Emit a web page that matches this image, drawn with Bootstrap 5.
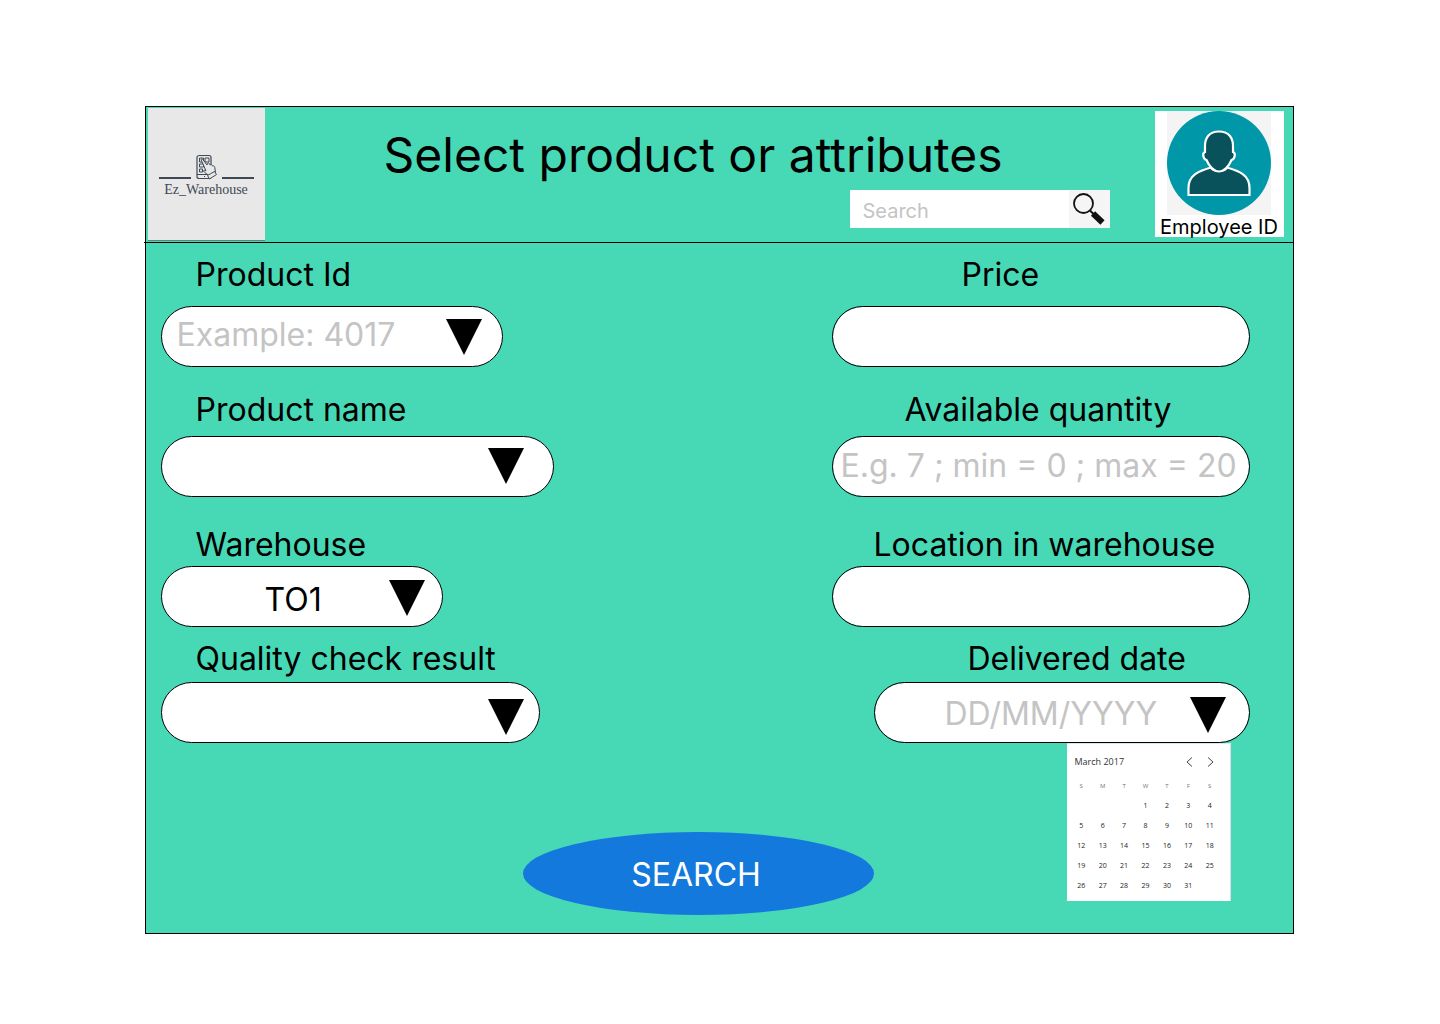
<!DOCTYPE html>
<html lang="en">
<head>
<meta charset="utf-8">
<meta name="viewport" content="width=device-width, initial-scale=1">
<title>Ez_Warehouse - Select product or attributes</title>
<link href="https://cdn.jsdelivr.net/npm/bootstrap@5.3.0/dist/css/bootstrap.min.css" rel="stylesheet">
<style>
  body { font-family: Inter, "Liberation Sans", sans-serif; color: #000; background: #fff; padding-right: 2px; }
  .panel { max-width: 1149px; margin: 106px auto 90px; background: #47d9b6; border: 1px solid #000; }
  .panel-head { min-height: 136px; border-bottom: 1px solid #000; margin-left: -2px; padding: 1px 9px 1px 4px; }
  .brand { width: 117px; background: #e8e8e8; padding-top: 44px; color: #3f4956; font: 14px/16px "Liberation Serif", serif; text-align: center; text-decoration: none; border-bottom: 1px solid #777; }
  .brand svg { display: block; width: 117px; height: 30px; }
  .head-main { padding-top: 18px; gap: 6px; }
  .page-title { font-size: 48px; line-height: 58px; font-weight: 400; padding-left: 119px; }
  .quick { width: 260px; height: 38px; }
  .quick .form-control { font-size: 20px; padding: 4px 13px 0; color: #000; }
  .quick .btn { width: 41px; background: #f5f5f5; }
  .profile { width: 129px; height: 126px; font-size: 20px; line-height: 24px; color: #000; margin: 3px 0 0 45px; text-decoration: none; }
  .profile svg { display: block; width: 104px; height: 104px; margin: 0 auto; }
  .panel-body { padding: 12px 43px 18px 15px; }
  .field-row { padding-bottom: 23px; }
  .field-row.low { padding-bottom: 28px; }
  .field-row.tight { padding-bottom: 12px; }
  .field-label { display: block; font-size: 32px; line-height: 39px; padding-left: 35px; margin-bottom: 12px; }
  .low .field-label { margin-bottom: 7px; }
  .tight .field-label { margin-bottom: 2px; }
  .last .field-label { margin-bottom: 4px; }
  .pill, .pill:focus { display: block; width: 100%; height: 61px; border: 1px solid #000; border-radius: 31px; font-size: 32px; line-height: 39px; color: #000; background-color: #fff; padding: 0 8px 2px; }
  .pill::placeholder, .pill.hinted, .quick .form-control::placeholder { color: #c4c4c4; opacity: 1; }
  .drop { background-image: url("data:image/svg+xml,%3Csvg xmlns='http://www.w3.org/2000/svg' viewBox='0 0 36 36'%3E%3Cpath d='M0 0H36L18 36Z'/%3E%3C/svg%3E"); background-size: 36px 36px; background-position: right 20px top 12px; background-repeat: no-repeat; }
  .pill.hinted { padding: 0 60px 4px 15px; }
  .w-id { width: 342px; } .w-name { width: 393px; } .w-site { width: 282px; } .w-check { width: 379px; } .w-right { width: 418px; } .w-date { width: 376px; }
  .drop-name { background-position: right 29px top 11px; }
  .drop-site { background-position: right 17px top 13px; padding: 5px 0 0 103px; }
  .drop-check { background-position: right 15px top 16px; }
  .drop-date { background-position: right 23px top 14px; padding: 2px 0 0 70px; }
  .lab-price { padding-left: 130px; } .lab-qty { padding-left: 73px; } .lab-loc { padding-left: 42px; } .lab-date { padding-left: 94px; }
  .calendar { position: absolute; top: 100%; right: 19px; width: 164px; height: 158px; background: #fff; border-top: 1px solid #d8e8ee; border-right: 1px solid #dde; padding: 8px 9px 0 4px; font-family: "Open Sans", "Noto Sans", sans-serif; color: #333; }
  .month { font-size: 9px; font-weight: 500; line-height: 20px; padding-left: 4px; }
  .arrow { border: 0; background: none; padding: 0; width: 21px; height: 20px; display: flex; align-items: center; justify-content: center; }
  .days { width: 150px; table-layout: fixed; margin-top: 4px; font-size: 7px; font-weight: 500; line-height: 20px; text-align: center; color: #222; }
  .days th, .days td { padding: 0; height: 20px; }
  .days th { font-size: 6px; font-weight: 400; color: #777; }
  .go-wrap { padding: 89px 14px 0 0; }
  .go, .go:hover { width: 351px; height: 83px; border: 0; border-radius: 50%; background: #1479dc; color: #fff; font-size: 32px; line-height: 39px; padding: 2px 4px 0 0; }
</style>
</head>
<body>
<main class="panel">
  <header class="panel-head d-flex">
    <a class="brand flex-shrink-0" href="#">
      <svg viewBox="0 0 117 30" fill="none" stroke="#3f4956" aria-hidden="true">
        <path d="M11 26H43M74 26H106" stroke-width="2"/>
        <rect x="49" y="3.500" width="14" height="23" rx="2" stroke-width="1.200"/>
        <path d="M49 22.500H63M56 24.500h1M51.500 6h4v4h-4zM57 6h4v4h-4zM51.500 12h4v3h-4zM51.500 17h3v3h-3z"/>
        <path d="M53 7.500c1-1 2 0 3 1.500l3 4 .5-1.500c1-1 2-.3 2.300 1l.4.500c1-1 2 0 2.400 1 1-.5 2 .2 2.200 1.500l.7 5-6 3.500c-2-2-5-3-6-5 0-1 1.500-1 2.500 0z" fill="#e8e8e8"/>
        <path d="M59.500 23.500l7-4 2 3-7 4.500z" fill="#e8e8e8"/>
      </svg>
      Ez_Warehouse
    </a>
    <div class="head-main flex-grow-1 d-flex flex-column">
      <h1 class="page-title mb-0">Select product or attributes</h1>
      <form class="quick d-flex align-self-end" role="search">
        <input class="form-control border-0 rounded-0" type="search" placeholder="Search" aria-label="Search">
        <button class="btn border-0 rounded-0 p-0 flex-shrink-0" type="button" aria-label="Search">
          <svg class="d-block" width="41" height="38" viewBox="0 0 41 38" fill="none" stroke="#111" aria-hidden="true">
            <circle cx="14.500" cy="13.500" r="9.500" stroke-width="1.800"/>
            <path d="M21 20.500l4 4" stroke-width="2"/>
            <path d="M24 23.500L33.500 32.500" stroke-width="6"/>
          </svg>
        </button>
      </form>
    </div>
    <a class="profile bg-white text-center flex-shrink-0" href="#">
      <svg viewBox="0 0 104 104" aria-hidden="true">
        <path fill="#f4f4f4" d="M0 0H104V104H0z"/>
        <circle cx="52" cy="52" r="52" fill="#0097a9"/>
        <path d="M21.500 84V77C21.500 64 32 60 44 56.500 46 61 58 61 60 56.500 72 60 82.500 64 82.500 77V84Z" fill="#0a525b" stroke="#fff" stroke-width="2.200"/>
        <path d="M52 20.500C42 20.500 37.500 27 38 37V41C35 42 36 48 39.500 49 42 55 47 60.500 52 60.500S62 55 64.500 49C68 48 69 42 66 41V37C66.500 27 62 20.500 52 20.500Z" fill="#0a525b" stroke="#fff" stroke-width="2.200"/>
      </svg>
      Employee ID
    </a>
  </header>

  <form class="panel-body">
    <div class="field-row d-flex justify-content-between">
      <div class="w-id">
        <label class="field-label" for="pid">Product Id</label>
        <select class="pill drop form-select hinted" id="pid"><option>Example: 4017</option></select>
      </div>
      <div class="w-right">
        <label class="field-label lab-price" for="price">Price</label>
        <input class="pill form-control" id="price" type="text">
      </div>
    </div>
    <div class="field-row low d-flex justify-content-between">
      <div class="w-name">
        <label class="field-label" for="pname">Product name</label>
        <select class="pill drop drop-name form-select" id="pname"><option></option></select>
      </div>
      <div class="w-right">
        <label class="field-label lab-qty" for="qty">Available quantity</label>
        <input class="pill form-control" id="qty" type="text" placeholder="E.g. 7 ; min = 0 ; max = 20">
      </div>
    </div>
    <div class="field-row tight d-flex justify-content-between">
      <div class="w-site">
        <label class="field-label" for="site">Warehouse</label>
        <select class="pill drop drop-site form-select" id="site"><option>TO1</option></select>
      </div>
      <div class="w-right">
        <label class="field-label lab-loc" for="loc">Location in warehouse</label>
        <input class="pill form-control" id="loc" type="text">
      </div>
    </div>
    <div class="last d-flex justify-content-between">
      <div class="w-check">
        <label class="field-label" for="check">Quality check result</label>
        <select class="pill drop drop-check form-select" id="check"><option></option></select>
      </div>
      <div class="w-date position-relative">
        <label class="field-label lab-date" for="date">Delivered date</label>
        <input class="pill drop drop-date form-control" id="date" type="text" placeholder="DD/MM/YYYY">
        <div class="calendar">
          <div class="d-flex">
            <span class="month flex-grow-1">March 2017</span>
            <button class="arrow" type="button" aria-label="Previous month"><svg width="7" height="10" viewBox="0 0 7 10" fill="none" stroke="#444"><path d="M6 .5L1 5l5 4.500"/></svg></button>
            <button class="arrow" type="button" aria-label="Next month"><svg width="7" height="10" viewBox="0 0 7 10" fill="none" stroke="#444"><path d="M1 .5L6 5 1 9.500"/></svg></button>
          </div>
          <table class="days">
            <thead><tr><th>S</th><th>M</th><th>T</th><th>W</th><th>T</th><th>F</th><th>S</th></tr></thead>
            <tbody>
              <tr><td></td><td></td><td></td><td>1</td><td>2</td><td>3</td><td>4</td></tr>
              <tr><td>5</td><td>6</td><td>7</td><td>8</td><td>9</td><td>10</td><td>11</td></tr>
              <tr><td>12</td><td>13</td><td>14</td><td>15</td><td>16</td><td>17</td><td>18</td></tr>
              <tr><td>19</td><td>20</td><td>21</td><td>22</td><td>23</td><td>24</td><td>25</td></tr>
              <tr><td>26</td><td>27</td><td>28</td><td>29</td><td>30</td><td>31</td><td></td></tr>
            </tbody>
          </table>
        </div>
      </div>
    </div>
    <div class="go-wrap d-flex justify-content-center">
      <button class="go btn" type="button">SEARCH</button>
    </div>
  </form>
</main>
<script src="https://cdn.jsdelivr.net/npm/bootstrap@5.3.0/dist/js/bootstrap.bundle.min.js"></script>
</body>
</html>
